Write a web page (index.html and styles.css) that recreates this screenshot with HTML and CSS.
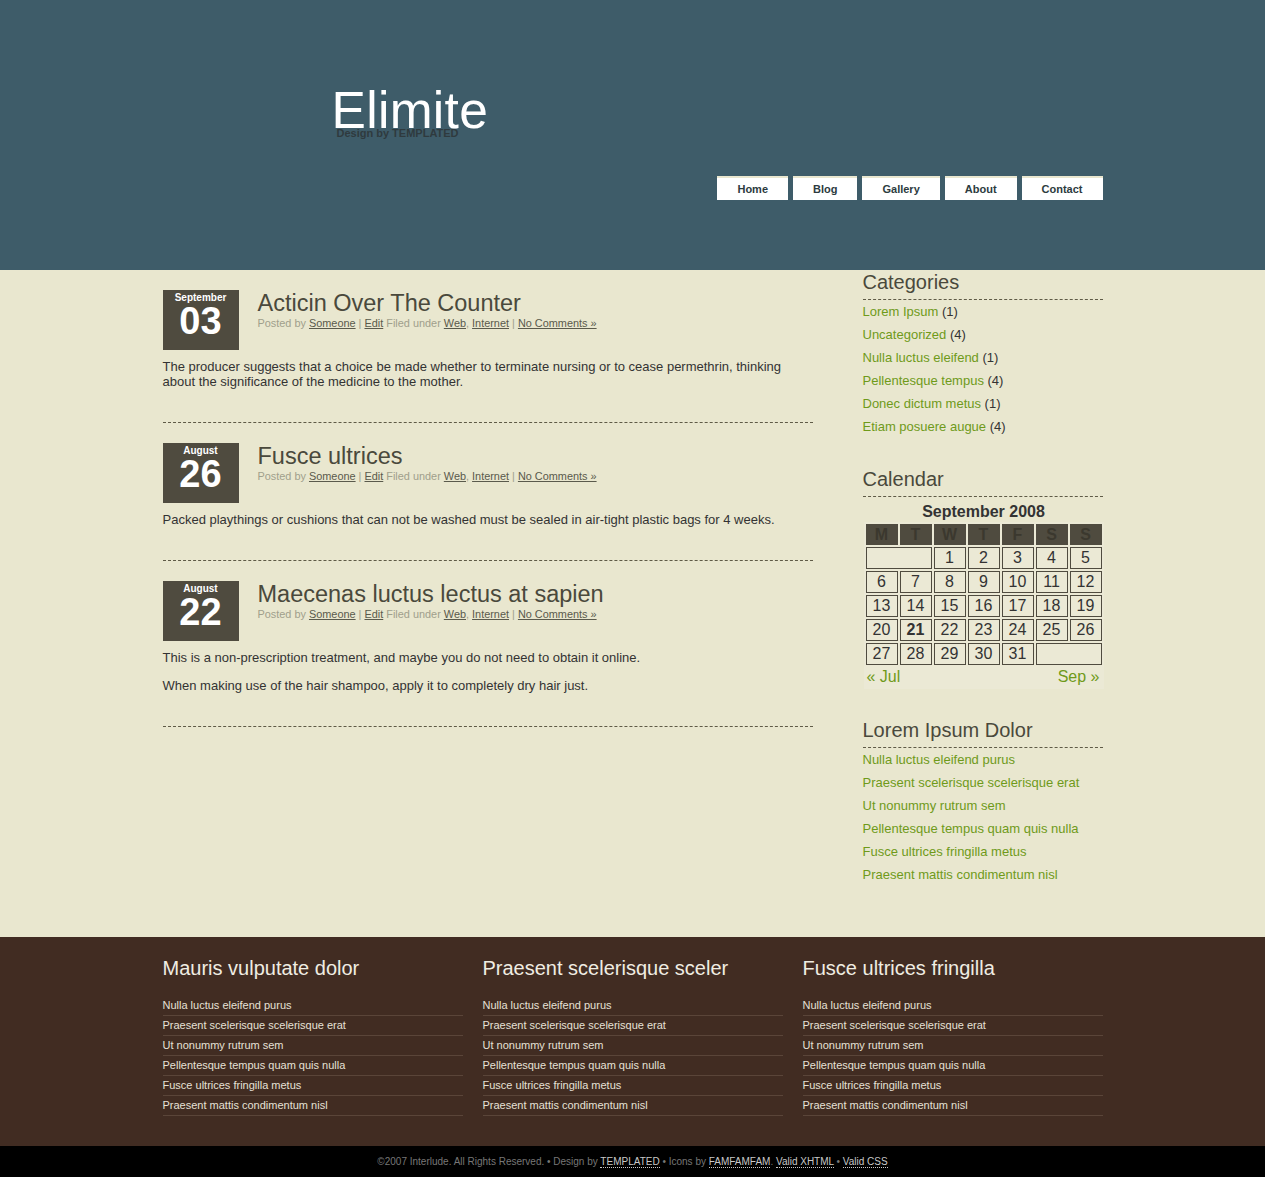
FILE: index.html
```html
<!DOCTYPE html>
<html>
<head>
<meta charset="utf-8">
<title>Elimite</title>
<link rel="stylesheet" href="styles.css">
</head>
<body>
<div class="header">
  <div class="wrap">
    <div class="logo">
      <h1>Elimite</h1>
      <p class="byline">Design by TEMPLATED</p>
    </div>
    <ul class="nav">
      <li><a href="#">Home</a></li>
      <li><a href="#">Blog</a></li>
      <li><a href="#">Gallery</a></li>
      <li><a href="#">About</a></li>
      <li><a href="#">Contact</a></li>
    </ul>
  </div>
</div>

<div class="page">
  <div class="wrap cols">
    <div class="content">
      <div class="post">
        <div class="post-head">
          <div class="date"><span class="month">September</span><span class="day">03</span></div>
          <div class="title-block">
            <h2 class="title">Acticin Over The Counter</h2>
            <p class="meta">Posted by <a href="#">Someone</a> | <a href="#">Edit</a> Filed under <a href="#">Web</a>, <a href="#">Internet</a> | <a href="#">No Comments »</a></p>
          </div>
        </div>
        <div class="entry">
          <p>The producer suggests that a choice be made whether to terminate nursing or to cease permethrin, thinking about the significance of the medicine to the mother.</p>
        </div>
      </div>
      <div class="post">
        <div class="post-head">
          <div class="date"><span class="month">August</span><span class="day">26</span></div>
          <div class="title-block">
            <h2 class="title">Fusce ultrices</h2>
            <p class="meta">Posted by <a href="#">Someone</a> | <a href="#">Edit</a> Filed under <a href="#">Web</a>, <a href="#">Internet</a> | <a href="#">No Comments »</a></p>
          </div>
        </div>
        <div class="entry">
          <p>Packed playthings or cushions that can not be washed must be sealed in air-tight plastic bags for 4 weeks.</p>
        </div>
      </div>
      <div class="post">
        <div class="post-head">
          <div class="date"><span class="month">August</span><span class="day">22</span></div>
          <div class="title-block">
            <h2 class="title">Maecenas luctus lectus at sapien</h2>
            <p class="meta">Posted by <a href="#">Someone</a> | <a href="#">Edit</a> Filed under <a href="#">Web</a>, <a href="#">Internet</a> | <a href="#">No Comments »</a></p>
          </div>
        </div>
        <div class="entry">
          <p>This is a non-prescription treatment, and maybe you do not need to obtain it online.</p>
          <p>When making use of the hair shampoo, apply it to completely dry hair just.</p>
        </div>
      </div>
    </div>

    <div class="sidebar">
      <div class="widget">
        <h2>Categories</h2>
        <ul class="links">
          <li><a href="#">Lorem Ipsum</a> (1)</li>
          <li><a href="#">Uncategorized</a> (4)</li>
          <li><a href="#">Nulla luctus eleifend</a> (1)</li>
          <li><a href="#">Pellentesque tempus</a> (4)</li>
          <li><a href="#">Donec dictum metus</a> (1)</li>
          <li><a href="#">Etiam posuere augue</a> (4)</li>
        </ul>
      </div>
      <div class="widget">
        <h2>Calendar</h2>
        <table class="calendar">
          <caption>September 2008</caption>
          <thead>
            <tr><th>M</th><th>T</th><th>W</th><th>T</th><th>F</th><th>S</th><th>S</th></tr>
          </thead>
          <tbody>
            <tr><td colspan="2" class="pad"></td><td>1</td><td>2</td><td>3</td><td>4</td><td>5</td></tr>
            <tr><td>6</td><td>7</td><td>8</td><td>9</td><td>10</td><td>11</td><td>12</td></tr>
            <tr><td>13</td><td>14</td><td>15</td><td>16</td><td>17</td><td>18</td><td>19</td></tr>
            <tr><td>20</td><td class="today">21</td><td>22</td><td>23</td><td>24</td><td>25</td><td>26</td></tr>
            <tr><td>27</td><td>28</td><td>29</td><td>30</td><td>31</td><td colspan="2" class="pad"></td></tr>
          </tbody>
          <tfoot>
            <tr><td colspan="3" class="prev"><a href="#">« Jul</a></td><td class="gap"></td><td colspan="3" class="next"><a href="#">Sep »</a></td></tr>
          </tfoot>
        </table>
      </div>
      <div class="widget">
        <h2>Lorem Ipsum Dolor</h2>
        <ul class="links">
          <li><a href="#">Nulla luctus eleifend purus</a></li>
          <li><a href="#">Praesent scelerisque scelerisque erat</a></li>
          <li><a href="#">Ut nonummy rutrum sem</a></li>
          <li><a href="#">Pellentesque tempus quam quis nulla</a></li>
          <li><a href="#">Fusce ultrices fringilla metus</a></li>
          <li><a href="#">Praesent mattis condimentum nisl</a></li>
        </ul>
      </div>
    </div>
  </div>
</div>

<div class="footer">
  <div class="wrap fcols">
    <div class="fcol">
      <h2>Mauris vulputate dolor</h2>
      <ul>
        <li><a href="#">Nulla luctus eleifend purus</a></li>
        <li><a href="#">Praesent scelerisque scelerisque erat</a></li>
        <li><a href="#">Ut nonummy rutrum sem</a></li>
        <li><a href="#">Pellentesque tempus quam quis nulla</a></li>
        <li><a href="#">Fusce ultrices fringilla metus</a></li>
        <li><a href="#">Praesent mattis condimentum nisl</a></li>
      </ul>
    </div>
    <div class="fcol">
      <h2>Praesent scelerisque sceler</h2>
      <ul>
        <li><a href="#">Nulla luctus eleifend purus</a></li>
        <li><a href="#">Praesent scelerisque scelerisque erat</a></li>
        <li><a href="#">Ut nonummy rutrum sem</a></li>
        <li><a href="#">Pellentesque tempus quam quis nulla</a></li>
        <li><a href="#">Fusce ultrices fringilla metus</a></li>
        <li><a href="#">Praesent mattis condimentum nisl</a></li>
      </ul>
    </div>
    <div class="fcol">
      <h2>Fusce ultrices fringilla</h2>
      <ul>
        <li><a href="#">Nulla luctus eleifend purus</a></li>
        <li><a href="#">Praesent scelerisque scelerisque erat</a></li>
        <li><a href="#">Ut nonummy rutrum sem</a></li>
        <li><a href="#">Pellentesque tempus quam quis nulla</a></li>
        <li><a href="#">Fusce ultrices fringilla metus</a></li>
        <li><a href="#">Praesent mattis condimentum nisl</a></li>
      </ul>
    </div>
  </div>
</div>

<div class="legal">
  <p>©2007 Interlude. All Rights Reserved. • Design by <a href="#">TEMPLATED</a> • Icons by <a href="#">FAMFAMFAM</a>. <a href="#">Valid XHTML</a> • <a href="#">Valid CSS</a></p>
</div>
</body>
</html>
```

FILE: styles.css
```css
html, body {
  margin: 0;
  padding: 0;
}
body {
  font-family: "Liberation Sans", Arial, sans-serif;
  font-size: 13px;
  color: #333;
  background: #e9e7cf;
}
.wrap {
  width: 940px;
  margin: 0 auto;
}

/* header */
.header {
  background: #3e5c69;
  height: 270px;
}
.header .wrap {
  display: flex;
  flex-direction: column;
}
.logo {
  padding-top: 88px;
  padding-left: 169px;
}
.logo h1 {
  margin: 0;
  font-size: 51.5px;
  line-height: 44px;
  font-weight: normal;
  color: #ffffff;
  letter-spacing: 0.3px;
}
.byline {
  margin: -5px 0 0 5px;
  font-size: 11px;
  line-height: 12px;
  font-weight: bold;
  color: #2f3a3e;
}
.nav {
  list-style: none;
  margin: 37px 0 0 0;
  padding: 0;
  display: flex;
  justify-content: flex-end;
  gap: 5px;
}
.nav li a {
  display: block;
  background: #fff;
  border-top: 2px solid #e9e7cf;
  padding: 0 20px;
  line-height: 22px;
  font-size: 11px;
  font-weight: bold;
  color: #2c3b40;
  text-decoration: none;
}

/* page */
.cols {
  display: flex;
  gap: 50px;
}
.content {
  width: 650px;
  padding-top: 20px;
}
.post {
  border-bottom: 1px dashed #5f5b47;
  margin-bottom: 20px;
}
.post-head {
  display: flex;
  gap: 19px;
}
.date {
  width: 76px;
  height: 60px;
  background: #4f4b3f;
  color: #fff;
  font-weight: bold;
  text-align: center;
  display: flex;
  flex-direction: column;
}
.date .month {
  font-size: 10px;
  line-height: 12px;
  padding-top: 2px;
}
.date .day {
  font-size: 38px;
  line-height: 32px;
  padding-top: 1px;
}
.title-block {
  flex: 1;
}
.title {
  margin: 0;
  font-size: 23.5px;
  line-height: 26px;
  font-weight: normal;
  color: #4a493c;
}
.meta {
  margin: 0;
  font-size: 10.9px;
  line-height: 14px;
  color: #a09f8c;
}
.meta a {
  color: #5a5a4c;
  text-decoration: underline;
}
.entry {
  padding: 9px 0 20px 0;
}
.entry p {
  margin: 0 0 13px 0;
  line-height: 15px;
  color: #333;
}

/* sidebar */
.sidebar {
  width: 240px;
  padding-bottom: 51px;
}
.widget {
  margin-bottom: 29px;
}
.widget:last-child {
  margin-bottom: 0;
}
.widget h2 {
  margin: 0;
  font-size: 20px;
  line-height: 24px;
  font-weight: normal;
  color: #4a493c;
  padding-bottom: 5px;
  border-bottom: 1px dashed #5f5b47;
}
.links {
  list-style: none;
  margin: 0;
  padding: 0;
}
.links li {
  line-height: 23px;
  color: #333;
}
.links a {
  color: #6f9a1a;
  text-decoration: none;
}

.calendar {
  border-spacing: 2px;
  margin-left: 1px;
  width: 240px;
  table-layout: fixed;
  font-size: 16px;
  background: #ebe9d5;
}
.calendar caption {
  font-weight: bold;
  line-height: 20px;
  padding-top: 5px;
  color: #333;
  background: #e9e7cf;
}
.calendar th {
  background: #4f4b3f;
  color: #3b382e;
  font-weight: bold;
  height: 21px;
  padding: 0;
  line-height: 21px;
}
.calendar td {
  border: 1px solid #4f4b3f;
  height: 20px;
  padding: 0;
  text-align: center;
  line-height: 20px;
  color: #333;
}
.calendar td.today {
  font-weight: bold;
}
.calendar tfoot td {
  border: none;
  line-height: 20px;
  height: 20px;
}
.calendar td.prev {
  text-align: left;
  padding-left: 1px;
}
.calendar td.next {
  text-align: right;
  padding-right: 2px;
}
.calendar tfoot a {
  color: #6f9a1a;
  text-decoration: none;
}

/* footer */
.footer {
  background: #412c22;
  padding: 19px 0 30px 0;
}
.fcols {
  display: flex;
  gap: 20px;
}
.fcol {
  width: 300px;
}
.fcol h2 {
  margin: 0 0 16px 0;
  font-size: 20px;
  line-height: 24px;
  font-weight: normal;
  color: #f0ede2;
}
.fcol ul {
  list-style: none;
  margin: 0;
  padding: 0;
}
.fcol li {
  line-height: 19px;
  border-bottom: 1px solid #5a4539;
  font-size: 11px;
}
.fcol a {
  color: #e6e1d6;
  text-decoration: none;
}

/* legal */
.legal {
  background: #000;
  height: 31px;
}
.legal p {
  margin: 0;
  text-align: center;
  font-size: 10px;
  line-height: 31px;
  color: #777;
}
.legal a {
  color: #c8c8c8;
  text-decoration: none;
  border-bottom: 1px dotted #c8c8c8;
}
```
